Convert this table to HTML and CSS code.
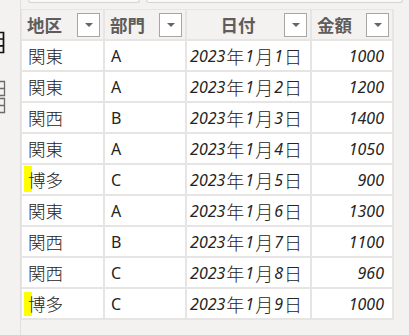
FILE: index.html
```html
<!DOCTYPE html>
<html lang="ja">
<head>
<meta charset="utf-8">
<link rel="stylesheet" href="styles.css">
</head>
<body>
<aside class="sidebar">
  <svg class="side-icons" width="20" height="120" viewBox="0 0 20 120">
    <path d="M0 32.5H3.5V52.5H0M0 39H3.5M0 45.8H3.5" fill="none" stroke="#111" stroke-width="1.7"/>
    <path d="M0 81.5H4.5V95.5H0M0 88.5H4.5" fill="none" stroke="#6a6a6a" stroke-width="1.3"/>
    <path d="M0 98.5H4.5V112.5H0M0 105.5H4.5" fill="none" stroke="#6a6a6a" stroke-width="1.3"/>
  </svg>
</aside>
<main class="main">
  <div class="topstrip">
    <div class="tbox tbox-a"></div>
    <div class="tbox tbox-b"></div>
  </div>
  <div class="grid">
    <div class="hcell"><span class="htext">地区</span><span class="dd"></span></div>
    <div class="hcell"><span class="htext">部門</span><span class="dd"></span></div>
    <div class="hcell"><span class="htext center">日付</span><span class="dd"></span></div>
    <div class="hcell"><span class="htext">金額</span><span class="dd"></span></div>

    <div class="cell jp">関東</div><div class="cell">A</div><div class="cell num">2023<span class="k">年</span>1<span class="k">月</span>1<span class="k">日</span></div><div class="cell num">1000</div>
    <div class="cell jp">関東</div><div class="cell">A</div><div class="cell num">2023<span class="k">年</span>1<span class="k">月</span>2<span class="k">日</span></div><div class="cell num">1200</div>
    <div class="cell jp">関西</div><div class="cell">B</div><div class="cell num">2023<span class="k">年</span>1<span class="k">月</span>3<span class="k">日</span></div><div class="cell num">1400</div>
    <div class="cell jp">関東</div><div class="cell">A</div><div class="cell num">2023<span class="k">年</span>1<span class="k">月</span>4<span class="k">日</span></div><div class="cell num">1050</div>
    <div class="cell jp"><span class="mark mark-a"></span><span class="txt">博多</span></div><div class="cell">C</div><div class="cell num">2023<span class="k">年</span>1<span class="k">月</span>5<span class="k">日</span></div><div class="cell num">900</div>
    <div class="cell jp">関東</div><div class="cell">A</div><div class="cell num">2023<span class="k">年</span>1<span class="k">月</span>6<span class="k">日</span></div><div class="cell num">1300</div>
    <div class="cell jp">関西</div><div class="cell">B</div><div class="cell num">2023<span class="k">年</span>1<span class="k">月</span>7<span class="k">日</span></div><div class="cell num">1100</div>
    <div class="cell jp">関西</div><div class="cell">C</div><div class="cell num">2023<span class="k">年</span>1<span class="k">月</span>8<span class="k">日</span></div><div class="cell num">960</div>
    <div class="cell jp"><span class="mark mark-b"></span><span class="txt">博多</span></div><div class="cell">C</div><div class="cell num">2023<span class="k">年</span>1<span class="k">月</span>9<span class="k">日</span></div><div class="cell num">1000</div>
  </div>
</main>
</body>
</html>
```
FILE: styles.css
```css
html, body {
  margin: 0;
  padding: 0;
}
body {
  width: 409px;
  height: 335px;
  overflow: hidden;
  background: #f3f2f1;
  display: flex;
  font-family: "Noto Sans", "Noto Sans CJK JP", sans-serif;
}
.sidebar {
  width: 20px;
  flex: none;
  border-right: 1px solid #e1dfdd;
  background: #f3f2f1;
}
.side-icons {
  display: block;
}
.main {
  display: flex;
  flex-direction: column;
}
.topstrip {
  height: 9px;
  display: flex;
  gap: 6px;
  padding-left: 7px;
}
.tbox {
  height: 2px;
  border: 1px solid #d6d4d2;
  border-top: none;
  border-radius: 0 0 4px 4px;
  background: #faf9f8;
}
.tbox-a { width: 110px; }
.tbox-b { width: 255px; }
.grid {
  display: grid;
  grid-template-columns: 81px 80px 123px 80px;
  grid-auto-rows: 29px;
  gap: 2px;
  padding: 1px 2px 2px 1px;
  background: #e6e5e4;
  width: 370px;
}
.hcell {
  background: #f3f2f1;
  display: flex;
  align-items: center;
  padding: 0 3px 0 5px;
}
.htext {
  font-family: "Noto Sans CJK JP", sans-serif;
  font-weight: 700;
  font-size: 17.5px;
  color: #5f5d5b;
  line-height: 1;
}
.htext.center {
  flex: 1;
  text-align: center;
}
.dd {
  margin-left: auto;
  width: 21px;
  height: 22px;
  border: 1px solid #a8a6a4;
  background: #fff;
  position: relative;
  flex: none;
}
.dd::after {
  content: "";
  position: absolute;
  left: 7px;
  top: 9px;
  border-left: 4px solid transparent;
  border-right: 4px solid transparent;
  border-top: 4px solid #666;
}
.cell {
  background: #fff;
  display: flex;
  align-items: center;
  padding: 0 6px;
  font-size: 16px;
  color: #252423;
  position: relative;
}
.cell.jp {
  font-family: "Noto Sans CJK JP", sans-serif;
  font-size: 17.5px;
  font-weight: 300;
}
.cell .k {
  font-family: "Noto Sans CJK JP", sans-serif;
  font-style: normal;
  font-size: 18px;
  font-weight: 300;
  padding: 0 1px;
}
.cell.num {
  justify-content: flex-end;
  font-style: italic;
  padding-right: 8px;
}
.cell.num .k:last-child {
  padding-right: 0;
}
.mark {
  position: absolute;
  left: 2px;
  width: 8px;
  background: #ffff00;
}
.mark-a { top: 1px; height: 26px; }
.mark-b { top: 3px; height: 24px; }
.txt {
  position: relative;
}
```
